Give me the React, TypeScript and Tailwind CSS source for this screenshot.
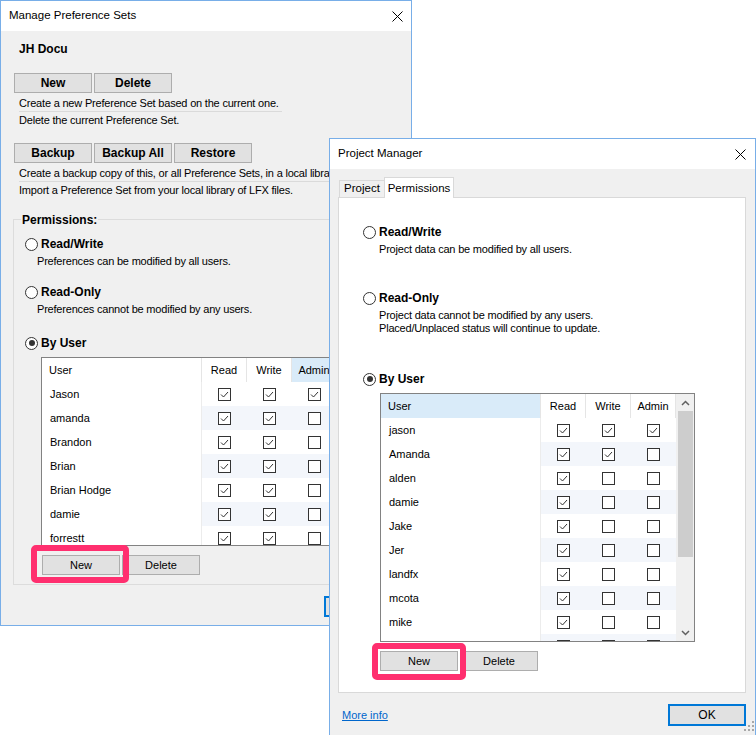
import React from 'react';

type Row = [string, boolean, boolean, boolean];

function CloseX() {
  return (
    <svg width="11" height="11" viewBox="0 0 11 11">
      <line x1="0.5" y1="0.5" x2="10.5" y2="10.5" stroke="#000" strokeWidth="1" />
      <line x1="10.5" y1="0.5" x2="0.5" y2="10.5" stroke="#000" strokeWidth="1" />
    </svg>
  );
}

function Check({ on }: { on: boolean }) {
  return (
    <div className="w-[13px] h-[13px] border border-[#333] bg-white flex items-center justify-center">
      {on && (
        <svg width="11" height="11" viewBox="0 0 11 11">
          <polyline points="2,5.5 4.5,8 9,3" fill="none" stroke="#333" strokeWidth="1" />
        </svg>
      )}
    </div>
  );
}

function Radio({ on }: { on?: boolean }) {
  return (
    <div className="w-[13px] h-[13px] rounded-full border border-[#333] bg-white flex items-center justify-center shrink-0">
      {on && <div className="w-[6px] h-[6px] rounded-full bg-[#333]" />}
    </div>
  );
}

function RadioRow({ label, on }: { label: string; on?: boolean }) {
  return (
    <div className="flex items-center gap-[3px] h-[16px]">
      <Radio on={on} />
      <span className="text-[12px] font-bold leading-[16px]">{label}</span>
    </div>
  );
}

function Chevron({ up }: { up?: boolean }) {
  return (
    <svg width="9" height="6" viewBox="0 0 9 6">
      <polyline
        points={up ? '1,5 4.5,1.5 8,5' : '1,1 4.5,4.5 8,1'}
        fill="none"
        stroke="#606060"
        strokeWidth="1.5"
      />
    </svg>
  );
}

function Grid({ rows, hl, heightClass, thumbClass }: { rows: Row[]; hl: 'user' | 'admin'; heightClass: string; thumbClass: string }) {
  return (
    <div className={`w-[315px] ${heightClass} border border-[#828282] bg-white flex`}>
      <div className="w-[295px] flex flex-col overflow-hidden">
        <div className="h-[24px] flex shrink-0 text-[11px]">
          <div className={`w-[160px] pl-[7px] flex items-center border-r border-[#e5e5e5] ${hl === 'user' ? 'bg-[#d9ebf9]' : ''}`}>User</div>
          <div className="w-[45px] flex items-center justify-center border-r border-[#e5e5e5]">Read</div>
          <div className="w-[45px] flex items-center justify-center border-r border-[#e5e5e5]">Write</div>
          <div className={`w-[45px] flex items-center justify-center border-r border-[#e5e5e5] ${hl === 'admin' ? 'bg-[#d9ebf9]' : ''}`}>Admin</div>
        </div>
        {rows.map((r, i) => (
          <div key={i} className="h-[24px] flex shrink-0 text-[11px]">
            <div className="w-[160px] pl-[8px] flex items-center border-r border-[#ececec]">{r[0]}</div>
            {[r[1], r[2], r[3]].map((c, j) => (
              <div key={j} className={`w-[45px] flex items-center justify-center ${i % 2 === 1 ? 'bg-[#f3f6fb]' : ''}`}>
                <Check on={c} />
              </div>
            ))}
          </div>
        ))}
      </div>
      <div className="w-[18px] bg-[#f0f0f0] flex flex-col items-center">
        <div className="h-[17px] w-full flex items-center justify-center shrink-0">
          <Chevron up />
        </div>
        <div className={`w-[15px] bg-[#cdcdcd] shrink-0 ${thumbClass}`} />
        <div className="flex-1" />
        <div className="h-[17px] w-full flex items-center justify-center shrink-0">
          <Chevron />
        </div>
      </div>
    </div>
  );
}

function BoldBtn({ children }: { children: React.ReactNode }) {
  return (
    <div className="w-[78px] h-[20px] bg-[#e1e1e1] border border-[#adadad] flex items-center justify-center text-[12px] font-bold">
      {children}
    </div>
  );
}

function Btn({ children }: { children: React.ReactNode }) {
  return (
    <div className="w-[78px] h-[20px] bg-[#e1e1e1] border border-[#adadad] flex items-center justify-center text-[11px]">
      {children}
    </div>
  );
}

const rows1: Row[] = [
  ['Jason', true, true, true],
  ['amanda', true, true, false],
  ['Brandon', true, true, false],
  ['Brian', true, true, false],
  ['Brian Hodge', true, true, false],
  ['damie', true, true, false],
  ['forrestt', true, true, false],
  ['jake', true, false, false],
];

const rows2: Row[] = [
  ['jason', true, true, true],
  ['Amanda', true, true, false],
  ['alden', true, false, false],
  ['damie', true, false, false],
  ['Jake', true, false, false],
  ['Jer', true, false, false],
  ['landfx', true, false, false],
  ['mcota', true, false, false],
  ['mike', true, false, false],
  ['nick', true, false, false],
];

function Window1() {
  return (
    <div className="absolute left-0 top-0 w-[412px] h-[626px] border border-[#78aee8] bg-[#f0f0f0] flex flex-col">
      <div className="h-[30px] bg-white flex items-center justify-between pl-[8px] pr-[8px] shrink-0">
        <span className="text-[11.5px]">Manage Preference Sets</span>
        <CloseX />
      </div>
      <div className="relative flex-1 flex flex-col">
        <div className="mt-[10px] ml-[18px] h-[16px] leading-[16px] text-[12px] font-bold">JH Docu</div>
        <div className="mt-[16px] ml-[13px] flex gap-[2px]">
          <BoldBtn>New</BoldBtn>
          <BoldBtn>Delete</BoldBtn>
        </div>
        <div className="mt-[2px] ml-[18px] w-[263px] h-[17px] leading-[16px] border-b border-[#dadada] text-[11px] tracking-[-0.2px] whitespace-nowrap">
          Create a new Preference Set based on the current one.
        </div>
        <div className="ml-[18px] h-[16px] leading-[16px] text-[11px] tracking-[-0.2px] whitespace-nowrap">Delete the current Preference Set.</div>
        <div className="mt-[15px] ml-[13px] flex gap-[2px]">
          <BoldBtn>Backup</BoldBtn>
          <BoldBtn>Backup All</BoldBtn>
          <BoldBtn>Restore</BoldBtn>
        </div>
        <div className="mt-[2px] ml-[18px] w-[380px] h-[17px] leading-[16px] border-b border-[#dadada] text-[11px] tracking-[-0.2px] whitespace-nowrap overflow-hidden">
          Create a backup copy of this, or all Preference Sets, in a local library.
        </div>
        <div className="ml-[18px] h-[16px] leading-[16px] text-[11px] tracking-[-0.2px] whitespace-nowrap">Import a Preference Set from your local library of LFX files.</div>

        <div className="relative mt-[21px] ml-[12px] w-[388px] h-[366px] border border-[#dcdcdc]">
          <div className="absolute -top-[8px] left-[7px] px-[1px] bg-[#f0f0f0] text-[12px] font-bold leading-[16px]">Permissions:</div>
          <div className="pl-[11px] flex flex-col">
            <div className="mt-[16px]">
              <RadioRow label="Read/Write" />
            </div>
            <div className="mt-[2px] ml-[12px] h-[14px] leading-[14px] text-[11px] tracking-[-0.2px]">Preferences can be modified by all users.</div>
            <div className="mt-[16px]">
              <RadioRow label="Read-Only" />
            </div>
            <div className="mt-[2px] ml-[12px] h-[14px] leading-[14px] text-[11px] tracking-[-0.2px]">Preferences cannot be modified by any users.</div>
            <div className="mt-[19px]">
              <RadioRow label="By User" on />
            </div>
            <div className="mt-[6px] ml-[16px]">
              <Grid rows={rows1} hl="admin" heightClass="h-[189px]" thumbClass="h-[120px]" />
            </div>
            <div className="mt-[9px] ml-[17px] flex gap-[2px]">
              <Btn>New</Btn>
              <Btn>Delete</Btn>
            </div>
          </div>
        </div>
        <div className="absolute left-[323px] top-[565px] w-[78px] h-[21px] border-2 border-[#0078d7] bg-[#e1e1e1]" />
      </div>
    </div>
  );
}

function Window2() {
  return (
    <div className="absolute left-[329px] top-[138px] w-[427px] h-[600px] border border-[#78aee8] bg-[#f0f0f0] flex flex-col">
      <div className="h-[30px] bg-white flex items-center justify-between pl-[8px] pr-[9px] shrink-0">
        <span className="text-[11.5px]">Project Manager</span>
        <CloseX />
      </div>
      <div className="mt-[8px] ml-[9px] h-[21px] flex items-end relative z-10 -mb-px">
        <div className="w-[46px] h-[18px] border border-[#d9d9d9] bg-[#f0f0f0] flex items-center justify-center text-[11.5px]">Project</div>
        <div className="-ml-px w-[70px] h-[21px] border border-b-0 border-[#d9d9d9] bg-white flex items-start justify-center pt-[2px] text-[11.5px]">
          Permissions
        </div>
      </div>
      <div className="ml-[8px] w-[408px] h-[496px] border border-[#d9d9d9] bg-white flex flex-col pl-[24px]">
        <div className="mt-[26px]">
          <RadioRow label="Read/Write" />
        </div>
        <div className="mt-[2px] ml-[16px] h-[14px] leading-[14px] text-[11px] tracking-[-0.2px]">Project data can be modified by all users.</div>
        <div className="mt-[34px]">
          <RadioRow label="Read-Only" />
        </div>
        <div className="mt-[3px] ml-[16px] leading-[13px] text-[11px] tracking-[-0.2px]">
          <div>Project data cannot be modified by any users.</div>
          <div>Placed/Unplaced status will continue to update.</div>
        </div>
        <div className="mt-[36px]">
          <RadioRow label="By User" on />
        </div>
        <div className="mt-[6px] ml-[17px]">
          <Grid rows={rows2} hl="user" heightClass="h-[249px]" thumbClass="h-[146px]" />
        </div>
        <div className="mt-[9px] ml-[17px] flex gap-[2px]">
          <Btn>New</Btn>
          <Btn>Delete</Btn>
        </div>
      </div>
      <div className="mt-[11px] flex items-center justify-between pl-[12px] pr-[9px]">
        <span className="text-[11px] text-[#0066cc] underline">More info</span>
        <div className="w-[78px] h-[22px] border-2 border-[#0078d7] bg-[#e1e1e1] flex items-center justify-center text-[12px]">OK</div>
      </div>
    </div>
  );
}

export default function App() {
  return (
    <div className="relative w-[756px] h-[735px] bg-white overflow-hidden text-black font-['Liberation_Sans',Arial,sans-serif]">
      <Window1 />
      <div className="absolute left-[31px] top-[545px] w-[98px] h-[38px] border-[6px] border-[#ff2f6f] rounded-[5px]" />
      <Window2 />
      <div className="absolute left-[372px] top-[643px] w-[94px] h-[37px] border-[6px] border-[#ff2f6f] rounded-[5px]" />
      <svg className="absolute left-[743px] top-[720px]" width="12" height="12" viewBox="0 0 12 12">
        <rect x="9" y="1" width="2" height="2" fill="#a8a8a8" />
        <rect x="5" y="5" width="2" height="2" fill="#a8a8a8" />
        <rect x="9" y="5" width="2" height="2" fill="#a8a8a8" />
        <rect x="1" y="9" width="2" height="2" fill="#a8a8a8" />
        <rect x="5" y="9" width="2" height="2" fill="#a8a8a8" />
        <rect x="9" y="9" width="2" height="2" fill="#a8a8a8" />
      </svg>
    </div>
  );
}
